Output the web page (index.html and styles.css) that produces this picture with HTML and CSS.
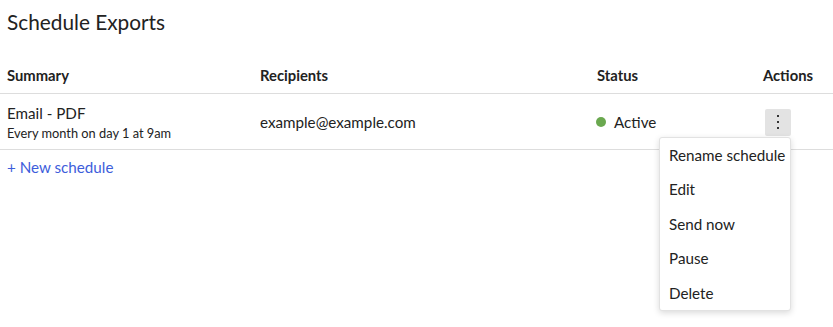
FILE: index.html
```html
<!DOCTYPE html>
<html>
<head>
<meta charset="utf-8">
<link rel="stylesheet" href="styles.css">
</head>
<body>
<div class="page">
  <h1 class="title">Schedule Exports</h1>
  <div class="table">
    <div class="row head">
      <div class="cell c1">Summary</div>
      <div class="cell c2">Recipients</div>
      <div class="cell c3">Status</div>
      <div class="cell c4">Actions</div>
    </div>
    <div class="row body">
      <div class="cell c1">
        <div class="main">Email - PDF</div>
        <div class="sub">Every month on day 1 at 9am</div>
      </div>
      <div class="cell c2">example@example.com</div>
      <div class="cell c3"><span class="dot"></span>Active</div>
      <div class="cell c4">
        <div class="menu-wrap">
          <button class="kebab" aria-label="Actions"><span></span><span></span><span></span></button>
          <ul class="menu">
            <li>Rename schedule</li>
            <li>Edit</li>
            <li>Send now</li>
            <li>Pause</li>
            <li>Delete</li>
          </ul>
        </div>
      </div>
    </div>
  </div>
  <a class="new" href="#">+ New schedule</a>
</div>
</body>
</html>
```
FILE: styles.css
```css
* { box-sizing: border-box; }
html, body { margin: 0; padding: 0; background: #fff; }
body {
  font-family: "Lato", "Noto Sans", sans-serif;
  color: #222;
  width: 833px;
  height: 327px;
  overflow: hidden;
}
.title {
  margin: 0;
  padding: 8px 7px 0;
  font-size: 20.8px;
  font-weight: 400;
  line-height: 28px;
  color: #222;
}
.table { margin-top: 25px; }
.row {
  display: grid;
  grid-template-columns: 253px 337px 150px 1fr;
  padding-left: 7px;
  border-bottom: 1px solid #ddd;
  align-items: center;
}
.row.head { height: 33px; font-weight: 700; font-size: 14.8px; align-items: start; padding-top: 5px; }
.row.head .c4 { text-align: right; padding-right: 20px; display: block; }
.row.body { height: 56px; font-size: 15.2px; padding-top: 1px; }
.main { font-size: 15.2px; line-height: 20px; }
.sub { font-size: 12.8px; line-height: 18px; margin-top: 1px; }
.c3 { display: flex; align-items: center; }
.dot {
  width: 10px; height: 10px; border-radius: 50%;
  background: #6aa84f;
  margin: 0 8px 0 -1px;
}
.row.body .c4 { display: flex; justify-content: flex-end; padding-right: 42px; }
.menu-wrap { position: relative; }
.kebab {
  width: 26px; height: 27px;
  border: none; border-radius: 2px;
  background: #e3e3e3;
  display: flex; flex-direction: column; align-items: center; justify-content: center;
  gap: 3.5px; padding: 0; margin-top: 0;
}
.kebab span { width: 2.5px; height: 2.5px; background: #333; display: block; }
.menu {
  position: absolute;
  top: 28px; right: 0;
  width: 132px;
  margin: 0; padding: 0;
  list-style: none;
  background: #fff;
  border: 1px solid #e2e2e2;
  border-radius: 3px;
  box-shadow: 0 2px 6px rgba(0,0,0,0.15);
  z-index: 5;
}
.menu li {
  height: 34.6px;
  line-height: 34px;
  padding: 0 9px;
  font-size: 15.2px;
  white-space: nowrap;
  color: #222;
}
.new {
  display: inline-block;
  margin: 7px 0 0 7px;
  color: #3d5ddb;
  text-decoration: none;
  font-size: 15.2px;
  line-height: 20px;
}
```
